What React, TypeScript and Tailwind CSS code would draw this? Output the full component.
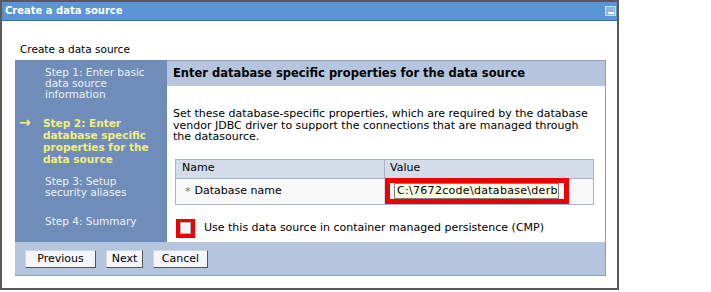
export default function App() {
  const font = "font-['DejaVu_Sans',Verdana,sans-serif]";
  const btn =
    "h-[18px] bg-[#f4f6fb] border border-[#d0d8e4] border-r-[#555] border-b-[#555] leading-none text-[11px]";
  return (
    <div className={`w-[711px] h-[292px] bg-white ${font} text-[11px] text-black`}>
      <div className="w-[619px] h-[290px] border-2 border-[#5a5a5a] flex flex-col">
        {/* title bar */}
        <div className="h-[19px] bg-[#5995d8] border-b border-[#3f6fa8] flex items-center justify-between pl-[3px] pr-[1px]">
          <span className="text-white font-bold text-[10px] leading-none">Create a data source</span>
          <div className="w-[11px] h-[10px] bg-[#8fb4e0] border border-[#c8dcf2] flex items-end justify-center pb-[1px]">
            <div className="w-[6px] h-[2px] bg-white" />
          </div>
        </div>

        <div className="flex-1 pl-[13px] pr-[11px]">
          <div className="pl-[5px] pt-[21px] h-[39px] leading-[14px] text-[10.5px]">Create a data source</div>

          {/* wizard */}
          <div className="flex flex-col">
            <div className="flex h-[182px]">
              {/* steps sidebar */}
              <div className="w-[152px] bg-[#6f8db8] text-[#eef2f8] pt-[7px] leading-[11px] text-[10.5px]">
                <div className="pl-[30px] pr-[2px]">Step 1: Enter basic data source information</div>
                <div className="flex mt-[17px]">
                  <span className="w-[28px] pl-[4px] text-[#f2ef7a] font-bold text-[14px] leading-[11px]">→</span>
                  <div className="flex-1 pr-[2px] text-[#f2ef7a] font-bold leading-[12px]">
                    Step 2: Enter database specific properties for the data source
                  </div>
                </div>
                <div className="pl-[30px] pr-[10px] mt-[11px]">Step 3: Setup security aliases</div>
                <div className="pl-[30px] pr-[2px] mt-[18px]">Step 4: Summary</div>
              </div>

              {/* content */}
              <div className="flex-1 border-r border-[#8d9db5] flex flex-col">
                <div className="h-[26px] bg-[#b5c5dd] border-t border-[#8d9db5] flex items-center pl-[6px] font-bold text-[11.5px]">
                  Enter database specific properties for the data source
                </div>
                <div className="pl-[6px] pr-[8px] pt-[22px] leading-[11.5px]">
                  Set these database-specific properties, which are required by the database vendor JDBC driver to support the connections that are managed through the datasource.
                </div>
                <div className="ml-[8px] mr-[11px] mt-[16px] border border-[#a6b4c8]">
                  <div className="flex h-[19px] bg-[#d4dce9] border-b border-[#a6b4c8]">
                    <div className="w-[209px] pl-[6px] flex items-center border-r border-[#a6b4c8]">Name</div>
                    <div className="flex-1 pl-[5px] flex items-center">Value</div>
                  </div>
                  <div className="flex h-[25px] bg-[#f8f8f8]">
                    <div className="w-[209px] pl-[9px] flex items-center gap-[4px] border-r border-[#d8dde6]">
                      <span className="text-[#8a7a10] text-[11px] leading-none">*</span>
                      <span>Database name</span>
                    </div>
                    <div className="flex-1 flex items-center">
                      <div className="w-[184px] h-[26px] -mt-[1px] border-[5px] border-[#ee0000] flex items-center pl-[4px]">
                        <div className="w-[165px] h-[16px] bg-[#fffbe6] border border-[#7f7f7f] pl-[2px] overflow-hidden whitespace-nowrap leading-[14px] tracking-[0.3px]">
                          C:\7672code\database\derby
                        </div>
                      </div>
                    </div>
                  </div>
                </div>
                <div className="flex items-center mt-[14px] ml-[9px]">
                  <div className="w-[19px] h-[19px] bg-[#ee0000] flex items-center justify-center">
                    <div className="w-[11px] h-[12px] bg-[#f4f4f4] border border-[#b0b0b0]" />
                  </div>
                  <span className="ml-[9px]">Use this data source in container managed persistence (CMP)</span>
                </div>
              </div>
            </div>

            {/* footer */}
            <div className="h-[34px] bg-[#b5c5dd] border-r border-b border-[#8d9db5] flex items-center gap-[10px] pl-[10px]">
              <button className={`w-[71px] ${btn}`}>Previous</button>
              <button className={`w-[37px] ${btn}`}>Next</button>
              <button className={`w-[55px] ${btn}`}>Cancel</button>
            </div>
          </div>
        </div>
      </div>
    </div>
  );
}
